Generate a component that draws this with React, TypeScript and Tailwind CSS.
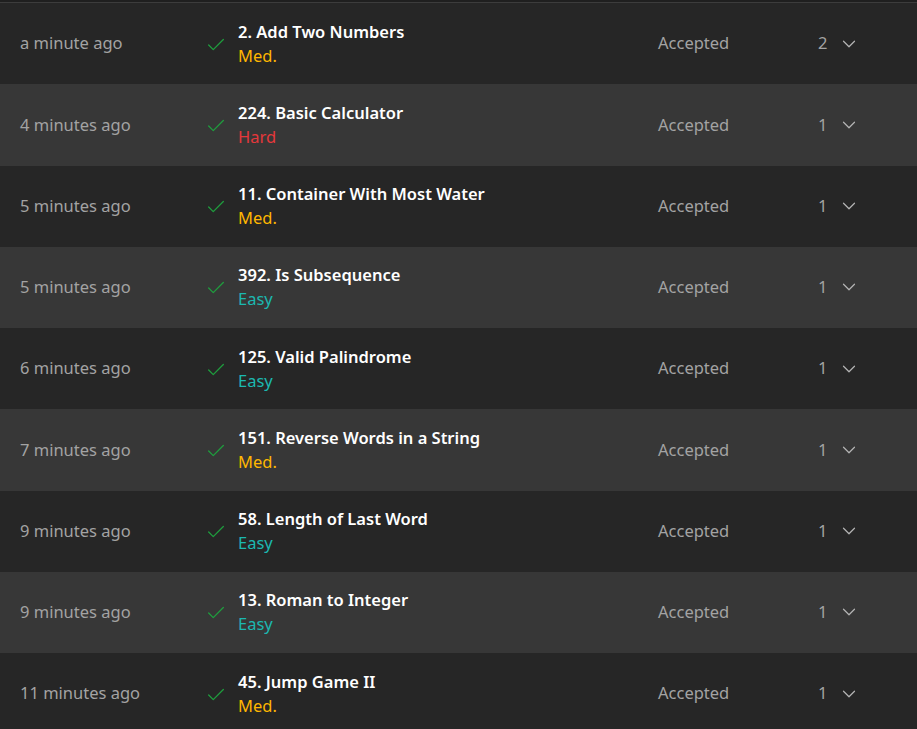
import { Check, ChevronDown } from "lucide-react";

type Level = "Easy" | "Med." | "Hard";

const rows: { time: string; title: string; level: Level; count: number }[] = [
  { time: "a minute ago", title: "2. Add Two Numbers", level: "Med.", count: 2 },
  { time: "4 minutes ago", title: "224. Basic Calculator", level: "Hard", count: 1 },
  { time: "5 minutes ago", title: "11. Container With Most Water", level: "Med.", count: 1 },
  { time: "5 minutes ago", title: "392. Is Subsequence", level: "Easy", count: 1 },
  { time: "6 minutes ago", title: "125. Valid Palindrome", level: "Easy", count: 1 },
  { time: "7 minutes ago", title: "151. Reverse Words in a String", level: "Med.", count: 1 },
  { time: "9 minutes ago", title: "58. Length of Last Word", level: "Easy", count: 1 },
  { time: "9 minutes ago", title: "13. Roman to Integer", level: "Easy", count: 1 },
  { time: "11 minutes ago", title: "45. Jump Game II", level: "Med.", count: 1 },
];

const levelColor: Record<Level, string> = {
  Easy: "text-[#1cb8b0]",
  "Med.": "text-[#ffb700]",
  Hard: "text-[#e5383b]",
};

export default function App() {
  return (
    <div className="h-[729px] w-[917px] overflow-hidden bg-[#262626] font-['Noto_Sans',sans-serif] text-[16.5px]">
      <div className="h-[2px] bg-[#1f1f1f]" />
      <div className="h-px bg-[#3c3c3c]" />
      {rows.map((r, i) => (
        <div
          key={i}
          className={`flex h-[81.25px] items-center ${i % 2 === 0 ? "bg-[#262626]" : "bg-[#373737]"}`}
        >
          <div className="w-[205px] shrink-0 pl-5 text-[#a3a3a3]">{r.time}</div>
          <div className="w-[33px] shrink-0 pt-[2px]">
            <Check size={22} strokeWidth={1.4} className="text-[#1f9d3e]" />
          </div>
          <div className="flex-1 leading-[24px]">
            <div className="font-semibold text-white">{r.title}</div>
            <div className={levelColor[r.level]}>{r.level}</div>
          </div>
          <div className="w-[160px] shrink-0 text-[#a3a3a3]">Accepted</div>
          <div className="flex w-[99px] shrink-0 items-center text-[#a3a3a3]">
            <span className="w-[19.5px]">{r.count}</span>
            <ChevronDown size={22} strokeWidth={1.3} className="text-[#b5b5b5]" />
          </div>
        </div>
      ))}
    </div>
  );
}
